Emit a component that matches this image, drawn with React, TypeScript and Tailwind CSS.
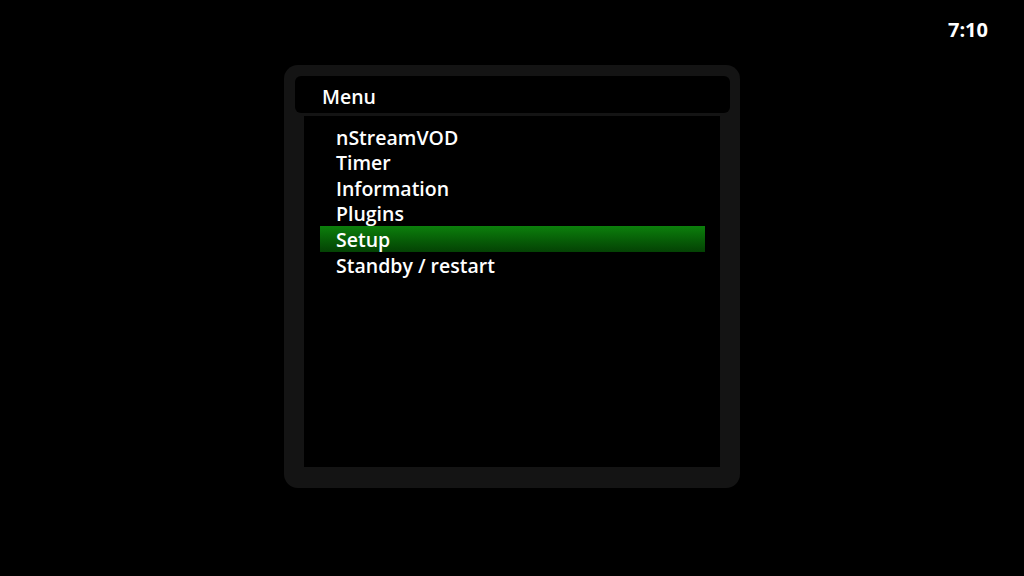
// Set-top box style main menu with a highlighted entry and a clock in the corner.
const items = ["nStreamVOD", "Timer", "Information", "Plugins", "Setup", "Standby / restart"];

export default function App() {
  const selected = 4;
  return (
    <div
      className="relative flex h-[576px] w-[1024px] items-start justify-center bg-black pt-[65px] text-white"
      style={{ fontFamily: '"Open Sans", "DejaVu Sans", sans-serif' }}
    >
      <div className="absolute right-[36px] top-[17px] text-[20px] font-bold leading-[26px]">7:10</div>

      <div className="flex h-[423px] w-[456px] flex-col rounded-[14px] bg-[#141414] pt-[11px] pb-[21px]">
        <div className="ml-[11px] mr-[10px] flex h-[37px] items-center rounded-[6px] bg-black pl-[27px] pt-[4px] text-[19.5px] font-semibold leading-none">
          Menu
        </div>
        <div className="mx-[20px] mt-[3px] flex-1 bg-black pt-[8px]">
          {items.map((label, i) => (
            <div
              key={label}
              className={
                i === selected
                  ? "ml-[16px] mr-[15px] flex h-[25.6px] items-center bg-gradient-to-b from-[#0c800c] to-[#044204] pl-[16px] pt-[1px] text-[19.5px] font-semibold leading-none"
                  : "ml-[16px] mr-[15px] flex h-[25.6px] items-center pl-[16px] pt-[1px] text-[19.5px] font-semibold leading-none"
              }
            >
              {label}
            </div>
          ))}
        </div>
      </div>
    </div>
  );
}
